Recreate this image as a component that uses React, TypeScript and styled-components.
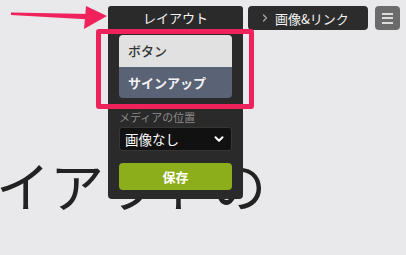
import React from 'react'
import styled, { createGlobalStyle } from 'styled-components'
import { ChevronDown, ChevronRight } from 'lucide-react'

const GlobalStyle = createGlobalStyle`
  html, body {
    margin: 0;
    padding: 0;
    background: #e9e9eb;
    font-family: "Noto Sans CJK JP", "Liberation Sans", sans-serif;
  }
`

export default function App() {
  return (
    <Page>
      <GlobalStyle />
      <Toolbar>
        <LayoutTab>
          レイアウト
          <Dropdown>
            <StyleGroup>
              <StyleOption>ボタン</StyleOption>
              <StyleOption $active>サインアップ</StyleOption>
            </StyleGroup>
            <FieldLabel>メディアの位置</FieldLabel>
            <SelectBox>
              <span>画像なし</span>
              <ChevronDown size={14} strokeWidth={3.5} />
            </SelectBox>
            <SaveButton>保存</SaveButton>
          </Dropdown>
        </LayoutTab>
        <LinkButton>
          <ChevronRight size={12} strokeWidth={2.5} color="#a8a8a8" />
          <span>画像&amp;リンク</span>
        </LinkButton>
        <MenuButton>
          <MenuLine />
          <MenuLine />
          <MenuLine />
        </MenuButton>
      </Toolbar>
      <Heading>レイアウトの</Heading>

      <Arrow viewBox="0 0 110 34" width="110" height="34">
        <polygon points="11,12.5 90,14 90,19.5 11,15" fill="#f0225c" />
        <polygon points="86,6 107,16 84,29" fill="#f0225c" />
      </Arrow>
      <Highlight />
    </Page>
  )
}

const Page = styled.div`
  position: relative;
  width: 406px;
  height: 255px;
  overflow: hidden;
`

const Toolbar = styled.div`
  display: flex;
  align-items: flex-start;
  gap: 5px;
  padding: 6px 0 0 108px;
  height: 24px;
`

const LayoutTab = styled.div`
  position: relative;
  z-index: 2;
  width: 135px;
  height: 24px;
  line-height: 24px;
  background: #2a2a2a;
  color: #f4f4f4;
  font-size: 13px;
  text-align: center;
  border-radius: 3px 3px 0 0;
`

const Dropdown = styled.div`
  position: absolute;
  top: 100%;
  left: 0;
  right: 0;
  display: flex;
  flex-direction: column;
  padding: 5px 11px 9px;
  background: #2a2a2a;
  border-radius: 0 0 4px 4px;
  text-align: left;
  line-height: normal;
`

const StyleGroup = styled.div`
  display: flex;
  flex-direction: column;
  border-radius: 4px;
  overflow: hidden;
`

const StyleOption = styled.div<{ $active?: boolean }>`
  height: 31.5px;
  display: flex;
  align-items: center;
  padding-left: 9px;
  font-size: 13px;
  font-weight: ${(p) => (p.$active ? 700 : 500)};
  color: ${(p) => (p.$active ? '#f2f2f4' : '#333')};
  background: ${(p) => (p.$active ? '#5a6375' : '#e1e1e1')};
`

const FieldLabel = styled.div`
  margin-top: 11px;
  font-size: 11px;
  line-height: 16px;
  color: #8a8a8a;
`

const SelectBox = styled.div`
  margin-top: 2px;
  height: 24px;
  box-sizing: border-box;
  display: flex;
  align-items: center;
  justify-content: space-between;
  padding: 0 5px 0 5px;
  background: #111;
  border: 1px solid #363636;
  border-radius: 3px;
  color: #fff;
  font-size: 13.5px;
`

const SaveButton = styled.div`
  margin-top: 12px;
  height: 27px;
  display: flex;
  align-items: center;
  justify-content: center;
  background: #8dae1b;
  border-radius: 4px;
  color: #fff;
  font-size: 13px;
  font-weight: 700;
`

const LinkButton = styled.div`
  width: 120px;
  height: 24px;
  box-sizing: border-box;
  display: flex;
  align-items: center;
  gap: 4px;
  padding-left: 11px;
  background: #2c2c2c;
  border-radius: 4px;
  color: #f4f4f4;
  font-size: 13px;
`

const MenuButton = styled.div`
  width: 25px;
  height: 24px;
  display: flex;
  flex-direction: column;
  align-items: center;
  justify-content: center;
  gap: 2.5px;
  margin-left: 2px;
  background: #6b6b6b;
  border-radius: 4px;
`

const MenuLine = styled.div`
  width: 11px;
  height: 2px;
  background: #dcdcdc;
`

const Heading = styled.h1`
  margin: 128px 0 0;
  font-size: 54px;
  font-weight: 400;
  line-height: 1;
  color: #222;
  white-space: nowrap;
  text-indent: -58px;
`

const Arrow = styled.svg`
  position: absolute;
  left: 0;
  top: 0;
  z-index: 3;
`

const Highlight = styled.div`
  position: absolute;
  left: 96px;
  top: 29px;
  width: 158px;
  height: 80px;
  box-sizing: border-box;
  border: 5px solid #f0225c;
  border-radius: 3px;
  z-index: 3;
`
